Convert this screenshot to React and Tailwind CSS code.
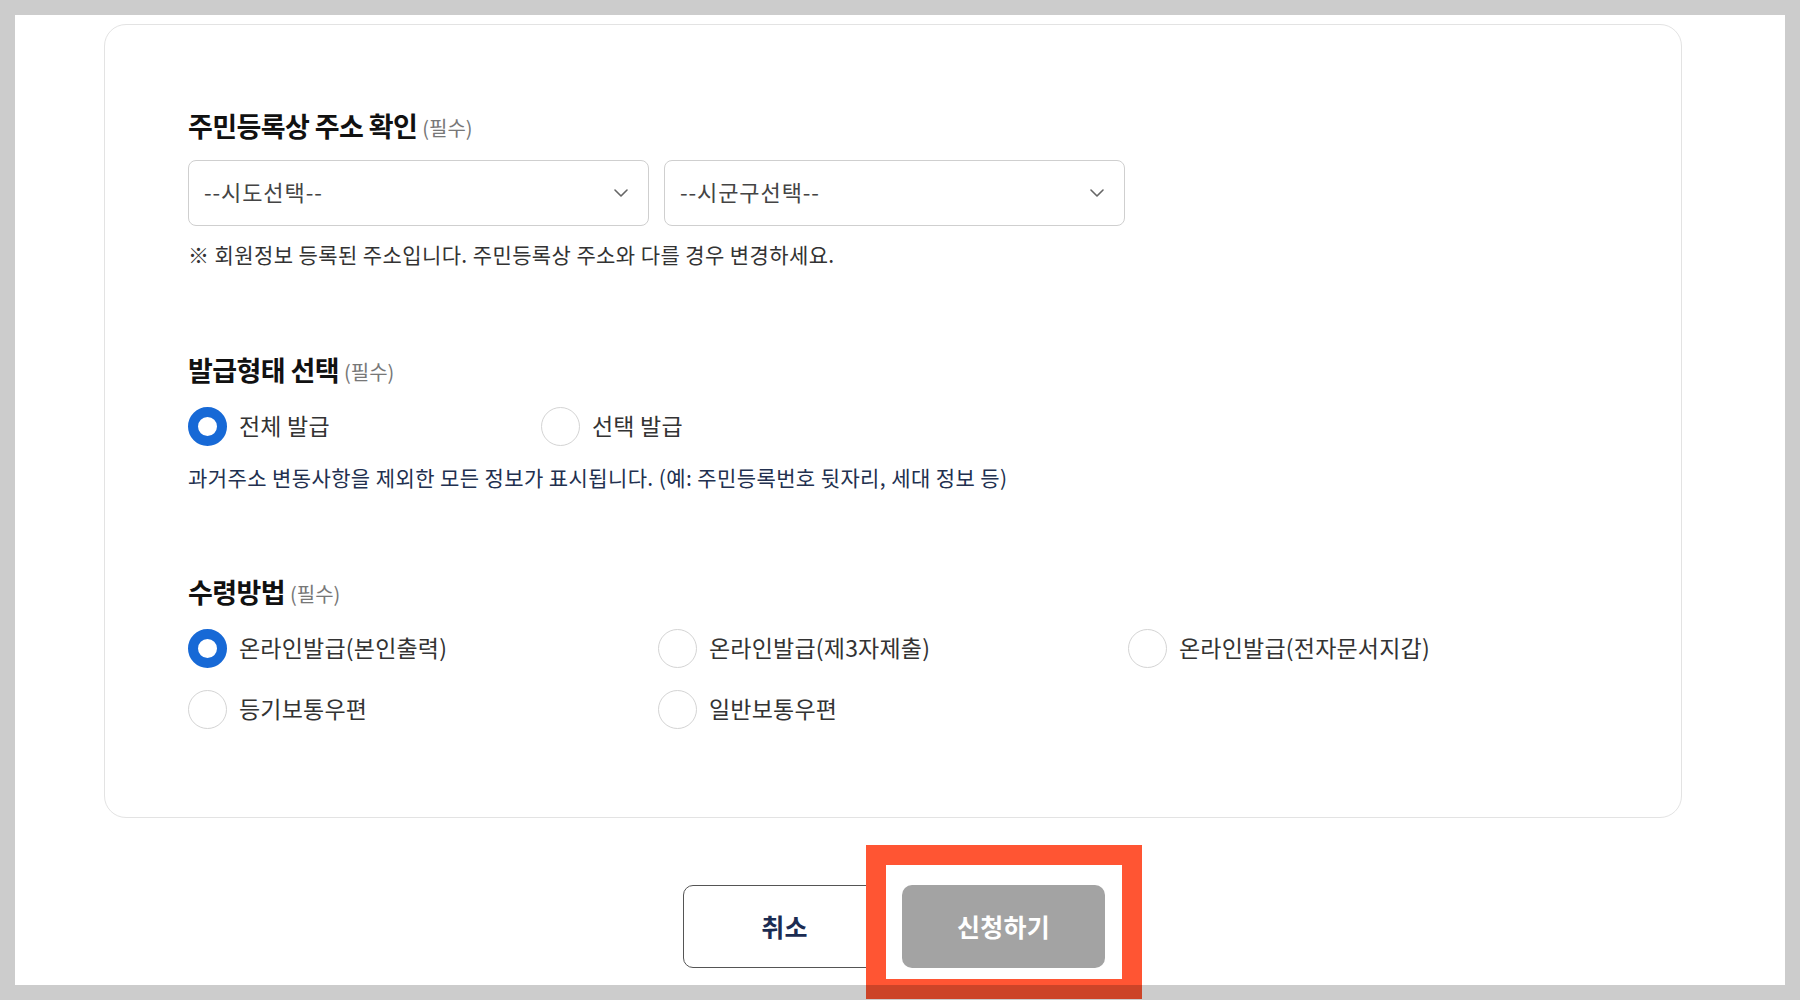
import React from "react";

const FONT = { fontFamily: '"Noto Sans CJK KR", "Noto Sans", sans-serif' };

function Chevron() {
  return (
    <svg width="14" height="8" viewBox="0 0 14 8" fill="none">
      <polyline points="1,1 7,7 13,1" stroke="#666" strokeWidth="1.6" strokeLinecap="round" strokeLinejoin="round" />
    </svg>
  );
}

function Select({ label }) {
  return (
    <div className="flex h-[66px] w-[461px] items-center justify-between rounded-[8px] border border-[#cfcfcf] bg-white pl-[15px] pr-[20px]">
      <span className="-mt-[3px] text-[22px] tracking-[0.9px] text-[#444]">{label}</span>
      <Chevron />
    </div>
  );
}

function Radio({ checked, label }) {
  return (
    <div className="flex items-center gap-[12px]">
      {checked ? (
        <span className="box-border h-[39px] w-[39px] shrink-0 rounded-full border-[10px] border-[#1769d6] bg-white" />
      ) : (
        <span className="box-border h-[39px] w-[39px] shrink-0 rounded-full border border-[#d4d4d4] bg-white" />
      )}
      <span className="-mt-[3px] text-[23px] leading-[30px] tracking-[0.2px] text-[#333]">{label}</span>
    </div>
  );
}

function Heading({ children }) {
  return (
    <div className="flex h-[36px] items-center">
      <span className="text-[27px] font-bold tracking-[-0.6px] text-[#111]">{children}</span>
      <span className="ml-[5px] mt-[3px] text-[20px] tracking-[0px] text-[#777]">(필수)</span>
    </div>
  );
}

export default function App() {
  return (
    <div className="relative h-[1000px] w-full overflow-hidden bg-white" style={FONT}>
      <div className="pt-[24px]">
        <div className="ml-[104px] w-[1578px] rounded-[22px] border border-[#e3e3e3] bg-white pl-[83px] pr-[83px] pt-[83px] pb-[88px]">
          <Heading>주민등록상 주소 확인</Heading>
          <div className="mt-[16px] flex gap-[15px]">
            <Select label="--시도선택--" />
            <Select label="--시군구선택--" />
          </div>
          <p className="mt-[13px] text-[21px] leading-[30px] tracking-[0.4px] text-[#333]">
            ※ 회원정보 등록된 주소입니다. 주민등록상 주소와 다를 경우 변경하세요.
          </p>

          <div className="mt-[83px]">
            <Heading>발급형태 선택</Heading>
          </div>
          <div className="mt-[19px] flex">
            <div className="w-[353px]">
              <Radio checked label="전체 발급" />
            </div>
            <Radio label="선택 발급" />
          </div>
          <p className="mt-[16px] text-[21px] leading-[30px] tracking-[0.4px] text-[#22304f]">
            과거주소 변동사항을 제외한 모든 정보가 표시됩니다. (예: 주민등록번호 뒷자리, 세대 정보 등)
          </p>

          <div className="mt-[82px]">
            <Heading>수령방법</Heading>
          </div>
          <div className="mt-[19px] grid grid-cols-[470px_470px_470px] gap-y-[22px]">
            <Radio checked label="온라인발급(본인출력)" />
            <Radio label="온라인발급(제3자제출)" />
            <Radio label="온라인발급(전자문서지갑)" />
            <Radio label="등기보통우편" />
            <Radio label="일반보통우편" />
          </div>
        </div>

        <div className="ml-[683px] mt-[67px] flex gap-[16px]">
          <button className="flex h-[83px] w-[203px] items-center justify-center rounded-[10px] border border-[#555] bg-white text-[25px] font-bold tracking-[0.3px] text-[#1b2c52]">
            취소
          </button>
          <div className="relative">
            <button className="flex h-[83px] w-[203px] items-center justify-center rounded-[10px] bg-[#a3a3a3] text-[25px] font-bold tracking-[0.3px] text-white">
              신청하기
            </button>
            <div className="pointer-events-none absolute left-[-36px] right-[-37px] top-[-40px] bottom-[-31px] border-[20px] border-[#ff5533]" />
          </div>
        </div>
      </div>

      <div className="pointer-events-none absolute inset-0 border-[15px] border-black/20" />
    </div>
  );
}
